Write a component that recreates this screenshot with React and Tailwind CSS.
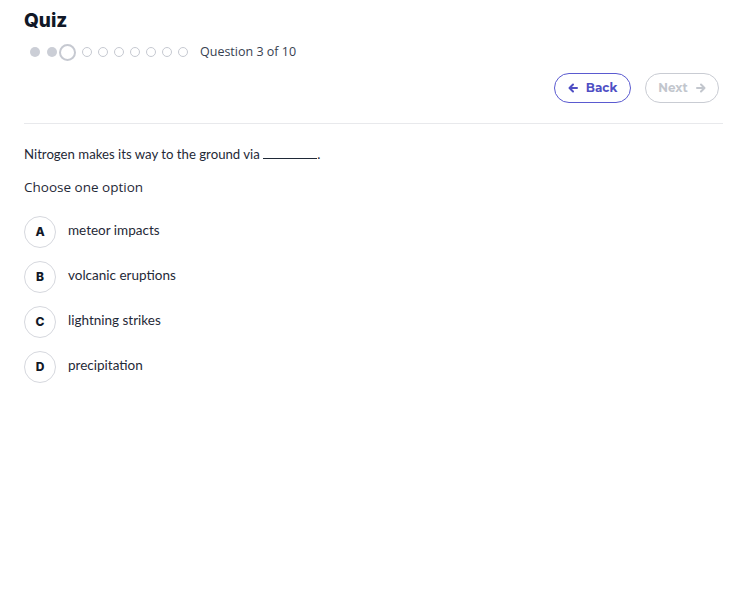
import React from "react";

const geo = { fontFamily: '"Montserrat", "Inter", "Open Sans", sans-serif' };

function Arrow({ dir = "left", color }) {
  return (
    <svg width="10" height="10" viewBox="0 0 10 10" fill="none">
      {dir === "left" ? (
        <path d="M9 5H2M5 1.5L1.5 5L5 8.5" stroke={color} strokeWidth="2" strokeLinecap="round" strokeLinejoin="round" />
      ) : (
        <path d="M1 5H8M5 1.5L8.5 5L5 8.5" stroke={color} strokeWidth="2" strokeLinecap="round" strokeLinejoin="round" />
      )}
    </svg>
  );
}

export default function App() {
  const options = [
    ["A", "meteor impacts"],
    ["B", "volcanic eruptions"],
    ["C", "lightning strikes"],
    ["D", "precipitation"],
  ];
  return (
    <div className="min-h-[615px] w-[737px] bg-white pl-6 pr-[14px] pt-[9px]" style={{ fontFamily: '"Open Sans", sans-serif' }}>
      <h1 className="text-[19px] font-extrabold leading-[24px] text-[#111827]" style={{ fontFamily: '"Inter", sans-serif', fontWeight: 800 }}>Quiz</h1>
      <div className="mt-[10px] flex items-center pl-[6px]">
        <span className="h-[10px] w-[10px] rounded-full bg-[#cbced6]" />
        <span className="ml-[7px] h-[10px] w-[10px] rounded-full bg-[#cbced6]" />
        <span className="ml-[2px] h-[17px] w-[17px] rounded-full border-2 border-[#c6c9d1]" />
        {Array.from({ length: 7 }).map((_, i) => (
          <span key={i} className="ml-[6px] h-[10px] w-[10px] rounded-full border border-[#c6c9d1]" />
        ))}
        <span className="ml-[12px] text-[12.5px] text-[#374151]" style={{ fontFamily: '"Open Sans", sans-serif' }}>Question 3 of 10</span>
      </div>
      <div className="mt-[11px] flex justify-end gap-[14px] pr-[4px]">
        <button className="flex h-[30px] w-[77px] items-center justify-center gap-[8px] rounded-full border border-[#5a5ad0] text-[12px] font-bold text-[#4f4fc4]" style={geo}>
          <Arrow dir="left" color="#4f4fc4" />
          Back
        </button>
        <button className="flex h-[30px] w-[74px] items-center justify-center gap-[8px] rounded-full border border-[#c9ccd3] text-[12px] font-bold text-[#c2c6cd]" style={geo}>
          Next
          <Arrow dir="right" color="#c2c6cd" />
        </button>
      </div>
      <div className="mt-[20px] h-px bg-[#e8e9ec]" />
      <p className="mt-[21px] text-[13.2px] text-[#1f2937]" style={{ fontFamily: '"Lato", sans-serif' }}>
        Nitrogen makes its way to the ground via{" "}
        <span className="inline-block w-[54px] border-b border-[#1f2937] align-baseline" />.
      </p>
      <p className="mt-[12px] text-[13.5px] text-[#1f2937]" style={{ fontFamily: '"Open Sans", sans-serif' }}>Choose one option</p>
      <div className="mt-[19px] flex flex-col gap-[13px]">
        {options.map(([l, t]) => (
          <div key={l} className="flex items-center">
            <span className="flex h-[32px] w-[32px] items-center justify-center rounded-full border border-[#d6d8de] text-[12px] font-extrabold text-[#111827]" style={{ fontFamily: '"Inter", sans-serif', fontWeight: 800 }}>{l}</span>
            <span className="ml-[12px] -mt-[3px] text-[13.5px] text-[#1f2937]" style={{ fontFamily: '"Lato", sans-serif' }}>{t}</span>
          </div>
        ))}
      </div>
    </div>
  );
}
